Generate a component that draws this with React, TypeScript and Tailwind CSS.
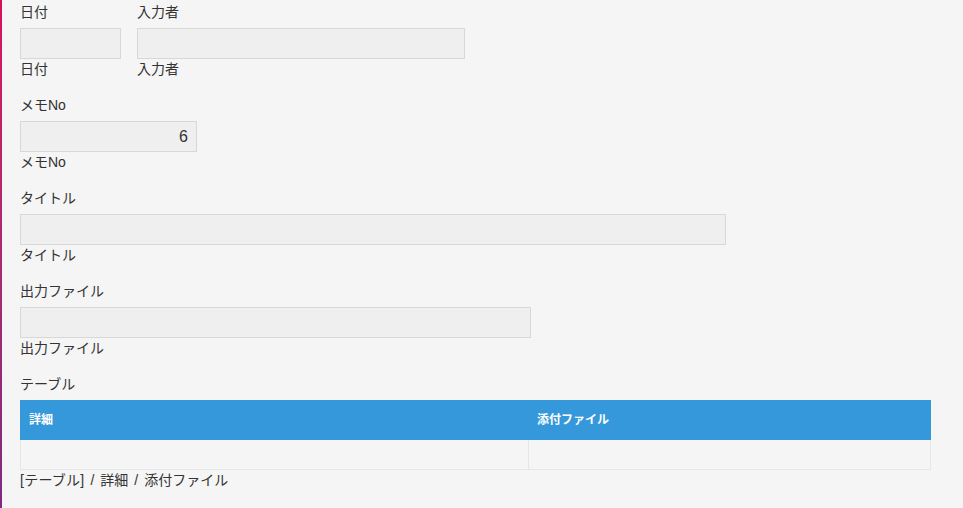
import React from "react";

const font = { fontFamily: '"Liberation Sans", "Noto Sans CJK JP", sans-serif' };

function Field({ label, width, value }: { label: string; width: string; value?: string }) {
  return (
    <div className="flex flex-col">
      <div className="h-5 leading-5 mb-[6px]">{label}</div>
      <div
        className={`${width} h-[31px] bg-[#efefef] border border-[#d8d8d8] flex items-center justify-end pr-[8px] text-[16px]`}
      >
        {value}
      </div>
      <div className="h-5 leading-5">{label}</div>
    </div>
  );
}

export default function App() {
  return (
    <div className="w-[963px] h-[508px] bg-[#f5f5f5] flex text-[14px] text-[#333]" style={font}>
      <div className="w-[2px] h-full bg-gradient-to-b from-[#d80f5a] to-[#7e2a80]" />
      <div className="flex-1 pl-[18px] pt-[2px] flex flex-col gap-4">
        <div className="flex gap-4">
          <Field label="日付" width="w-[101px]" />
          <Field label="入力者" width="w-[328px]" />
        </div>
        <Field label="メモNo" width="w-[177px]" value="6" />
        <Field label="タイトル" width="w-[706px]" />
        <Field label="出力ファイル" width="w-[511px]" />
        <div className="flex flex-col">
          <div className="h-5 leading-5 mb-[6px]">テーブル</div>
          <div className="w-[911px]">
            <div className="flex h-[40px] bg-[#3598db] text-white text-[12px] font-bold items-center">
              <div className="w-[509px] pl-[9px]">詳細</div>
              <div className="flex-1 pl-[8px]">添付ファイル</div>
            </div>
            <div className="flex h-[30px] border-x border-b border-[#e2e7e7]">
              <div className="w-[508px] border-r border-[#e2e7e7]" />
              <div className="flex-1" />
            </div>
          </div>
          <div className="h-5 leading-5 flex">
            <span className="tracking-[0.25px]">[テーブル]</span>
            <span className="mx-[6px]">/</span>
            <span>詳細</span>
            <span className="mx-[6px]">/</span>
            <span>添付ファイル</span>
          </div>
        </div>
      </div>
    </div>
  );
}
